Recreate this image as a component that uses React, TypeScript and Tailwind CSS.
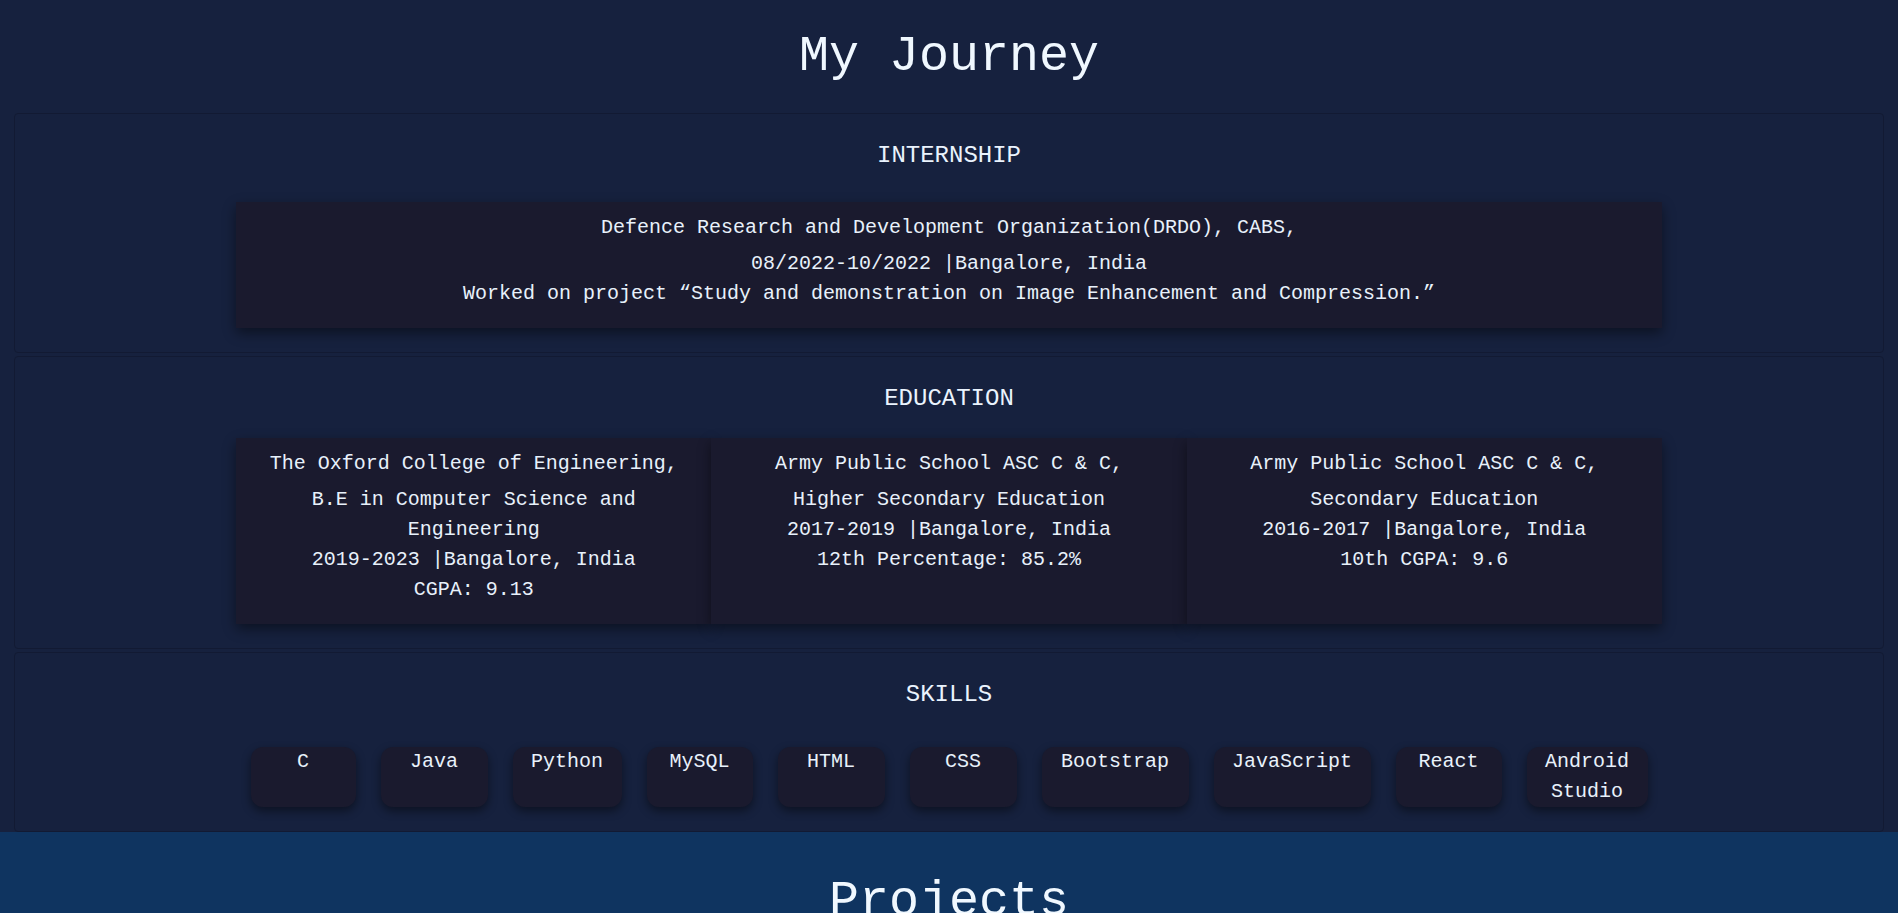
const education = [
  {
    school: "The Oxford College of Engineering,",
    lines: [
      "B.E in Computer Science and Engineering",
      "2019-2023 |Bangalore, India",
      "CGPA: 9.13",
    ],
  },
  {
    school: "Army Public School ASC C & C,",
    lines: [
      "Higher Secondary Education",
      "2017-2019 |Bangalore, India",
      "12th Percentage: 85.2%",
    ],
  },
  {
    school: "Army Public School ASC C & C,",
    lines: [
      "Secondary Education",
      "2016-2017 |Bangalore, India",
      "10th CGPA: 9.6",
    ],
  },
];

const skills = [
  { name: "C", w: "w-[105px]" },
  { name: "Java", w: "w-[107px]" },
  { name: "Python", w: "w-[109px]" },
  { name: "MySQL", w: "w-[106px]" },
  { name: "HTML", w: "w-[107px]" },
  { name: "CSS", w: "w-[107px]" },
  { name: "Bootstrap", w: "w-[147px]" },
  { name: "JavaScript", w: "w-[157px]" },
  { name: "React", w: "w-[106px]" },
  { name: "Android Studio", w: "w-[121px]" },
];

function Section({
  title,
  gap,
  children,
}: {
  title: string;
  gap: string;
  children: React.ReactNode;
}) {
  return (
    <section className="rounded border border-[#121a33] px-4 pt-[24px] pb-[24px]">
      <h2 className={`text-center text-[24px] leading-[36px] text-[#eaf3fd] ${gap}`}>
        {title}
      </h2>
      {children}
    </section>
  );
}

export default function App() {
  return (
    <div className="min-h-screen bg-[#16213e] font-['Liberation_Mono',monospace] text-[#e8f1fb]">
      {/* Journey */}
      <div className="pt-[27px]">
        <h1 className="mb-[26px] text-center text-[50px] leading-[60px] text-[#f0f8ff]">
          My Journey
        </h1>

        <div className="flex flex-col gap-[3px] px-[14px]">
          <Section title="INTERNSHIP" gap="mb-[28px]">
            <div className="mx-auto w-[1426px] bg-[#1a1a2e] pt-[11px] pb-[19px] text-center text-[20px] leading-[30px] shadow-[0_5px_12px_rgba(0,0,0,0.45)]">
              <h3 className="mb-[6px]">
                Defence Research and Development Organization(DRDO), CABS,
              </h3>
              <p>08/2022-10/2022 |Bangalore, India</p>
              <p>
                Worked on project “Study and demonstration on Image Enhancement
                and Compression.”
              </p>
            </div>
          </Section>

          <Section title="EDUCATION" gap="mb-[21px]">
            <div className="mx-auto grid w-[1426px] grid-cols-3">
              {education.map((e, i) => (
                <div
                  key={i}
                  className="bg-[#1a1a2e] px-4 pt-[11px] pb-[19px] text-center text-[20px] leading-[30px] shadow-[0_5px_12px_rgba(0,0,0,0.45)]"
                >
                  <h3 className="mb-[6px]">{e.school}</h3>
                  {e.lines.map((l) => (
                    <p key={l}>{l}</p>
                  ))}
                </div>
              ))}
            </div>
          </Section>

          <Section title="SKILLS" gap="mb-[34px]">
            <div className="flex justify-center gap-[25px]">
              {skills.map((s) => (
                <div
                  key={s.name}
                  className={`${s.w} rounded-[12px] bg-[#1a1a2e] px-2 text-center text-[20px] leading-[30px] shadow-[0_4px_10px_rgba(0,0,0,0.45)]`}
                >
                  {s.name}
                </div>
              ))}
            </div>
          </Section>
        </div>
      </div>

      {/* Projects */}
      <div className="bg-[#0f3460] pt-[40px] pb-16">
        <h1 className="text-center text-[50px] leading-[60px] text-[#f0f8ff]">
          Projects
        </h1>
      </div>
    </div>
  );
}
